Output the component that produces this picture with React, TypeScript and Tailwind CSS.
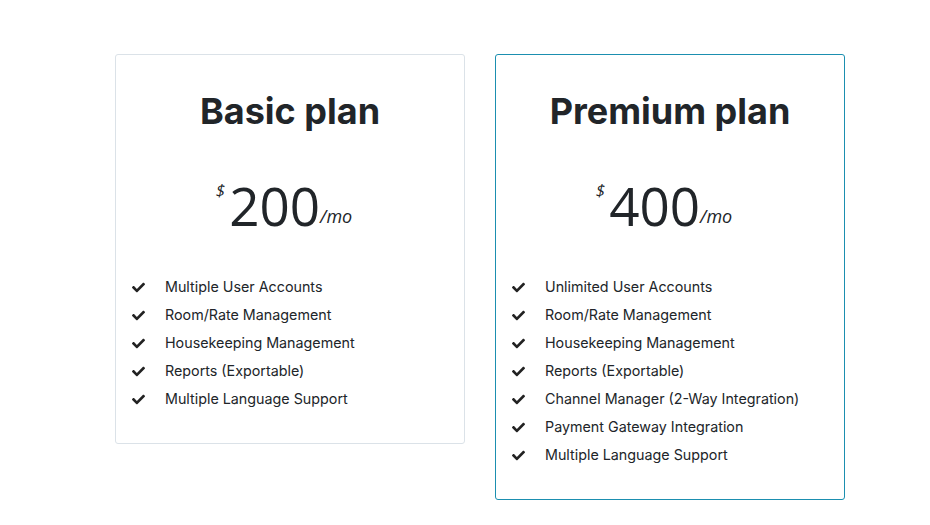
import React from 'react';
import { FaCheck } from 'react-icons/fa';

interface Plan {
  name: string;
  price: string;
  features: string[];
  highlight?: boolean;
}

const plans: Plan[] = [
  {
    name: 'Basic plan',
    price: '200',
    features: [
      'Multiple User Accounts',
      'Room/Rate Management',
      'Housekeeping Management',
      'Reports (Exportable)',
      'Multiple Language Support',
    ],
  },
  {
    name: 'Premium plan',
    price: '400',
    highlight: true,
    features: [
      'Unlimited User Accounts',
      'Room/Rate Management',
      'Housekeeping Management',
      'Reports (Exportable)',
      'Channel Manager (2-Way Integration)',
      'Payment Gateway Integration',
      'Multiple Language Support',
    ],
  },
];

const PlanCard: React.FC<{ plan: Plan }> = ({ plan }) => (
  <div
    className={
      plan.highlight
        ? 'w-[350px] rounded-[3px] border border-[#1b8fb0] bg-white pt-[36px] pb-[30px]'
        : 'w-[350px] rounded-[3px] border border-[#dbe2e8] bg-white pt-[36px] pb-[30px]'
    }
  >
    <h2 className="text-center font-['Inter',sans-serif] text-[36px] font-bold leading-[40px] text-[#212529]">
      {plan.name}
    </h2>
    <div className="mt-[45px] flex items-start justify-center pr-[12px] font-['Open_Sans',sans-serif] text-[#212529]">
      <span className="mt-[5px] mr-[4px] text-[17px] italic leading-none">$</span>
      <span className="text-[53px] leading-[60px]">{plan.price}</span>
      <span className="mt-[30px] text-[18px] italic leading-[20px]">/mo</span>
    </div>
    <ul className="mt-[37px] pl-[16px] font-['Inter',sans-serif] text-[14.3px] text-[#212529]">
      {plan.features.map((f) => (
        <li key={f} className="flex h-[28px] items-center">
          <FaCheck className="h-[13px] w-[13px] text-[#222]" />
          <span className="ml-[20px]">{f}</span>
        </li>
      ))}
    </ul>
  </div>
);

export default function App() {
  return (
    <div className="min-h-[525px] w-[930px] bg-white">
      <div className="flex items-start gap-[30px] pt-[54px] pl-[115px]">
        {plans.map((p) => (
          <PlanCard key={p.name} plan={p} />
        ))}
      </div>
    </div>
  );
}
